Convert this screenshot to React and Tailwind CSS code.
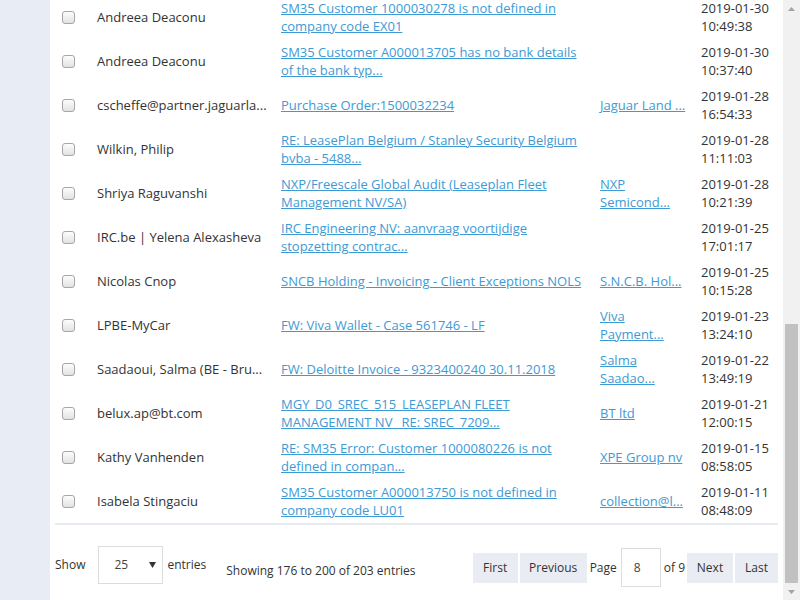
import React from "react";

const rows = [
  { name: "Andreea Deaconu", subject: "SM35 Customer 1000030278 is not defined in company code EX01", company: "", date: "2019-01-30", time: "10:49:38" },
  { name: "Andreea Deaconu", subject: "SM35 Customer A000013705 has no bank details of the bank typ...", company: "", date: "2019-01-30", time: "10:37:40" },
  { name: "cscheffe@partner.jaguarla...", subject: "Purchase Order:1500032234", company: "Jaguar Land ...", date: "2019-01-28", time: "16:54:33" },
  { name: "Wilkin, Philip", subject: "RE: LeasePlan Belgium / Stanley Security Belgium bvba - 5488...", company: "", date: "2019-01-28", time: "11:11:03" },
  { name: "Shriya Raguvanshi", subject: "NXP/Freescale Global Audit (Leaseplan Fleet Management NV/SA)", company: "NXP Semicond...", date: "2019-01-28", time: "10:21:39" },
  { name: "IRC.be | Yelena Alexasheva", subject: "IRC Engineering NV: aanvraag voortijdige stopzetting contrac...", company: "", date: "2019-01-25", time: "17:01:17" },
  { name: "Nicolas Cnop", subject: "SNCB Holding - Invoicing - Client Exceptions NOLS", company: "S.N.C.B. Hol...", date: "2019-01-25", time: "10:15:28" },
  { name: "LPBE-MyCar", subject: "FW: Viva Wallet - Case 561746 - LF", company: "Viva Payment...", date: "2019-01-23", time: "13:24:10" },
  { name: "Saadaoui, Salma (BE - Bru...", subject: "FW: Deloitte Invoice - 9323400240 30.11.2018", company: "Salma Saadao...", date: "2019-01-22", time: "13:49:19" },
  { name: "belux.ap@bt.com", subject: "MGY_D0_SREC_515_LEASEPLAN FLEET MANAGEMENT NV _RE: SREC_7209...", company: "BT ltd", date: "2019-01-21", time: "12:00:15" },
  { name: "Kathy Vanhenden", subject: "RE: SM35 Error: Customer 1000080226 is not defined in compan...", company: "XPE Group nv", date: "2019-01-15", time: "08:58:05" },
  { name: "Isabela Stingaciu", subject: "SM35 Customer A000013750 is not defined in company code LU01", company: "collection@l...", date: "2019-01-11", time: "08:48:09" },
];

// fake checkbox, the native one looks different in headless chrome
const Check = () => (
  <div className="w-[13px] h-[13px] rounded-[3px] border border-[#a6a6a6] bg-gradient-to-b from-[#fdfdfd] to-[#e2e2e2]" />
);

const Btn = ({ w, children }) => (
  <div className={`h-[30px] flex items-center justify-center bg-[#e9ecf3] text-[#333] ${w}`}>{children}</div>
);

export default function App() {
  return (
    <div className="flex h-[600px] w-[800px] overflow-hidden bg-white font-['Open_Sans',sans-serif] text-[13px] leading-[18px] text-[#333]">
      {/* sidebar edge */}
      <div className="w-[50px] shrink-0 bg-[#e8ecf4]" />

      {/* main */}
      <div className="flex-1 flex flex-col px-[5px]">
        <div className="-mt-[5px] border-b-2 border-[#e8ebf1]">
          {rows.map((r, i) => (
            <div key={i} className="grid grid-cols-[32px_184px_319px_101px_87px] h-[44px] items-center">
              <div className="pl-[7px]">
                <Check />
              </div>
              <div className="pl-[10px] whitespace-nowrap overflow-hidden">{r.name}</div>
              <div className="pl-[10px] pr-[2px]">
                <a href="#" className="text-[#3d9ad4] underline">{r.subject}</a>
              </div>
              <div className="pl-[10px]">
                {r.company && <a href="#" className="text-[#3d9ad4] underline">{r.company}</a>}
              </div>
              <div className="pl-[10px]">
                <div>{r.date}</div>
                <div>{r.time}</div>
              </div>
            </div>
          ))}
        </div>

        {/* footer */}
        <div className="flex items-start text-[12px]">
          <div className="flex items-center mt-[21px]">
            <span>Show</span>
            <div className="ml-[13px] w-[65px] h-[38px] border border-[#dcdcdc] flex items-center justify-between pl-[15px] pr-[6px]">
              <span className="text-[#444]">25</span>
              <svg width="7" height="6" viewBox="0 0 7 6"><path d="M0 0h7L3.5 6z" fill="#333" /></svg>
            </div>
            <span className="ml-[4px]">entries</span>
          </div>
          <div className="ml-[20px] mt-[37px]">Showing 176 to 200 of 203 entries</div>
          <div className="ml-auto mt-[23px] flex items-center">
            <Btn w="w-[45px]">First</Btn>
            <div className="ml-[2px]"><Btn w="w-[67px]">Previous</Btn></div>
            <span className="ml-[3px]">Page</span>
            <div className="ml-[4px] w-[40px] h-[39px] border border-[#dcdcdc] flex items-center pl-[12px] text-[#444]">8</div>
            <span className="ml-[3px]">of 9</span>
            <div className="ml-[2px]"><Btn w="w-[46px]">Next</Btn></div>
            <div className="ml-[2px]"><Btn w="w-[43px]">Last</Btn></div>
          </div>
        </div>
      </div>

      {/* scrollbar */}
      <div className="w-[17px] shrink-0 bg-[#f1f1f1] flex flex-col items-center">
        <div className="h-[17px] flex items-center justify-center">
          <svg width="7" height="4" viewBox="0 0 7 4"><path d="M0 4h7L3.5 0z" fill="#a3a3a3" /></svg>
        </div>
        <div className="flex-1 w-full flex flex-col justify-end px-[2px]">
          <div className="h-[259px] bg-[#c1c1c1]" />
        </div>
        <div className="h-[17px] flex items-center justify-center">
          <svg width="7" height="4" viewBox="0 0 7 4"><path d="M0 0h7L3.5 4z" fill="#a3a3a3" /></svg>
        </div>
      </div>
    </div>
  );
}
